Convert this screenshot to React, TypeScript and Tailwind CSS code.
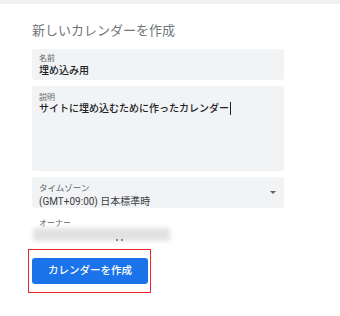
const font = { fontFamily: 'Roboto, "Noto Sans CJK JP", "Noto Sans", sans-serif' };

const Field = ({
  label,
  value,
  className,
}: {
  label: string;
  value: React.ReactNode;
  className: string;
}) => (
  <div className={`rounded-[3px] bg-[#f1f3f4] px-[7px] ${className}`}>
    <div className="text-[8px] leading-[9px] text-[#5f6368]">{label}</div>
    {value}
  </div>
);

export default function App() {
  return (
    <div className="w-[340px] h-[316px] bg-white overflow-hidden" style={font}>
      <div className="h-[4px] bg-[#f1f1f1]" />
      <div className="pl-[32px] w-[284px]">
        <h1 className="mt-[19px] text-[13px] leading-[16px] text-[#70757a] font-normal">
          新しいカレンダーを作成
        </h1>

        <Field
          className="mt-[10px] h-[31px] pt-[5px]"
          label="名前"
          value={
            <div className="mt-[2px] text-[10px] leading-[12px] font-medium text-[#202124]">
              埋め込み用
            </div>
          }
        />

        <Field
          className="mt-[6px] h-[85px] pt-[7px]"
          label="説明"
          value={
            <div className="flex items-center text-[10px] leading-[12px] font-medium text-[#202124]">
              サイトに埋め込むために作ったカレンダー
              <span className="ml-[1px] inline-block w-[1px] h-[13px] bg-[#202124]" />
            </div>
          }
        />

        <div className="mt-[6px] h-[31px] pt-[7px] rounded-[3px] bg-[#f1f3f4] px-[7px] flex justify-between">
          <div>
            <div className="text-[8.5px] leading-[9px] text-[#5f6368]">タイムゾーン</div>
            <div className="mt-[3px] text-[10px] leading-[12px] text-[#3c4043]">
              (GMT+09:00) 日本標準時
            </div>
          </div>
          <div className="pt-[7px] pr-[1px]">
            <div className="w-0 h-0 border-l-[3px] border-r-[3px] border-t-[3px] border-l-transparent border-r-transparent border-t-[#5f6368]" />
          </div>
        </div>

        <div className="mt-[11px] pl-[7px] text-[8px] leading-[9px] text-[#5f6368]">オーナー</div>
        <div className="relative ml-[1px] w-[137px] h-[13px]">
          <div className="absolute inset-0 bg-[#e2e2e2] blur-[2px]" />
          <div className="absolute left-[83px] bottom-[0px] w-[2px] h-[2px] bg-[#8a8a8a] blur-[0.5px]" />
          <div className="absolute left-[88px] bottom-[0px] w-[2px] h-[2px] bg-[#8a8a8a] blur-[0.5px]" />
        </div>

        <div className="mt-[8px] -ml-[4px] inline-block border border-[#e8262b] pt-[7px] pb-[8px] pl-[3px] pr-[2px]">
          <button className="w-[116px] h-[26px] rounded-[3px] bg-[#1a73e8] text-white text-[10.5px] font-medium leading-[26px]">
            カレンダーを作成
          </button>
        </div>
      </div>
    </div>
  );
}
